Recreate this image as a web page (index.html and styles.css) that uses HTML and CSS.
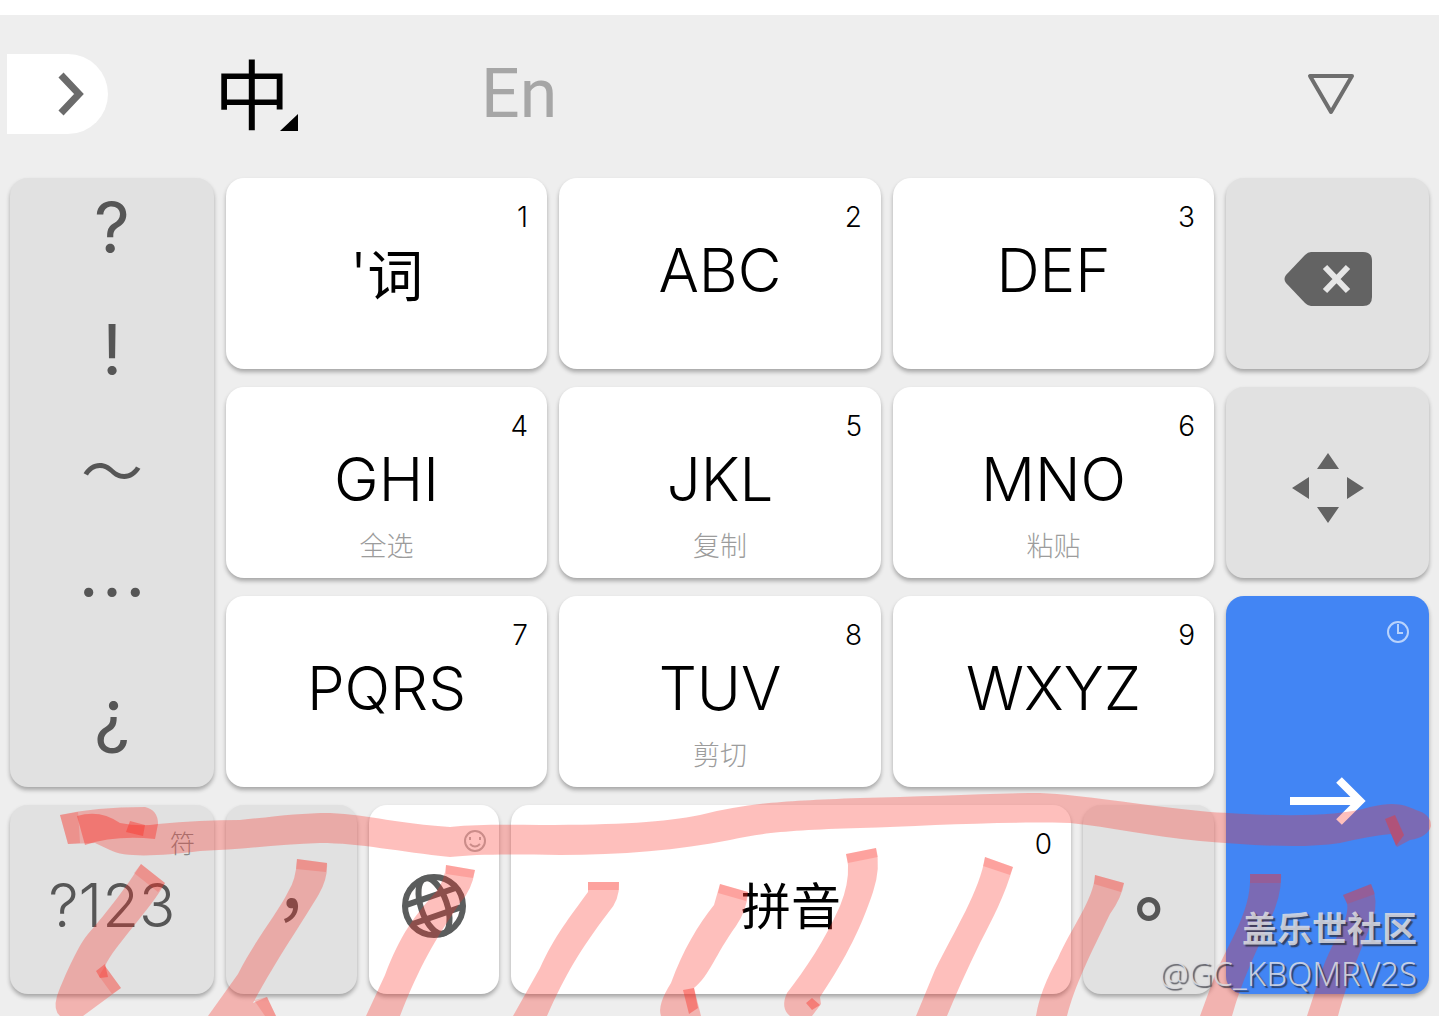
FILE: index.html
```html
<!DOCTYPE html>
<html lang="zh-CN">
<head>
<meta charset="utf-8">
<meta name="viewport" content="width=device-width, initial-scale=1">
<title>拼音键盘</title>
<link rel="stylesheet" href="styles.css">
</head>
<body>
<main class="ime">
  <header class="toolbar">
    <button class="expand" aria-label="展开"><svg width="28" height="44" viewBox="0 0 28 44"><path d="M4 3 22 22 4 41" fill="none" stroke="#6b6b6b" stroke-width="7"/></svg></button>
    <button class="lang lang-zh">中<svg class="corner" width="18" height="17" viewBox="0 0 18 17"><path d="M18 0V17H0z"/></svg></button>
    <button class="lang lang-en">En</button>
    <button class="hide" aria-label="收起键盘"><svg width="48" height="42" viewBox="0 0 48 42"><path d="M3 3H45L24 39z" fill="none" stroke="#6e6e6e" stroke-width="4" stroke-linejoin="round"/></svg></button>
  </header>
  <section class="keys">
    <div class="symbols">
      <button>?</button><button>!</button><button class="wide">～</button><button class="wide dots">…</button><button>¿</button>
    </div>
    <button class="key"><span class="hint">1</span><span class="label label-word">'<span class="han">词</span></span></button>
    <button class="key"><span class="hint">2</span><span class="label">ABC</span></button>
    <button class="key"><span class="hint">3</span><span class="label">DEF</span></button>
    <button class="key grey icon-key" aria-label="删除"><svg width="90" height="56" viewBox="0 0 90 56"><path d="M28 1H80Q89 1 89 10V46Q89 55 80 55H28Q25 55 22 52L3 32Q0 28 3 24L22 4Q25 1 28 1z" fill="#636363"/><path d="M42 16 65 40M65 16 42 40" stroke="#e6e6e6" stroke-width="6"/></svg></button>
    <button class="key"><span class="hint">4</span><span class="label">GHI</span><span class="action">全选</span></button>
    <button class="key"><span class="hint">5</span><span class="label">JKL</span><span class="action">复制</span></button>
    <button class="key"><span class="hint">6</span><span class="label">MNO</span><span class="action">粘贴</span></button>
    <button class="key grey icon-key" aria-label="移动光标"><svg width="72" height="72" viewBox="0 0 72 72" fill="#636363"><path d="M36 1 47 17H25zM36 71 47 55H25zM0 36 17 25V47zM72 36 55 25V47z"/></svg></button>
    <button class="key"><span class="hint">7</span><span class="label">PQRS</span></button>
    <button class="key"><span class="hint">8</span><span class="label">TUV</span><span class="action">剪切</span></button>
    <button class="key"><span class="hint">9</span><span class="label">WXYZ</span></button>
    <button class="key enter" aria-label="确定">
      <svg class="clock" width="24" height="24" viewBox="0 0 24 24" fill="none" stroke="#b9d3fc" stroke-width="2"><circle cx="12" cy="12" r="10"/><path d="M12 4V13H17"/></svg>
      <svg class="arrow" width="78" height="50" viewBox="0 0 78 50" fill="none" stroke="#fff" stroke-width="8"><path d="M1 25H70M50 4 71 25 50 46"/></svg>
    </button>
    <div class="bottom-row">
      <button class="key grey"><span class="hint hint-han">符</span><span class="label label-num">?123</span></button>
      <button class="key grey icon-key comma" lang="zh-TW">，</button>
      <button class="key globe" aria-label="切换输入法">
        <svg class="smile" width="24" height="24" viewBox="0 0 24 24" fill="none" stroke="#b5b5b5" stroke-width="2"><circle cx="12" cy="12" r="10"/><path d="M7 15Q12 20 17 15"/><path d="M7 8V11M17 8V11"/></svg>
        <svg class="world" width="66" height="66" viewBox="0 0 66 66" fill="none" stroke="#5b5d5d" stroke-width="6"><circle cx="33" cy="33" r="29"/><g transform="rotate(-19 33 33)"><ellipse cx="33" cy="33" rx="13" ry="29"/><path d="M6 23H60M6 43H60"/></g></svg>
      </button>
      <button class="key"><span class="hint">0</span><span class="label label-space">拼音</span></button>
      <button class="key grey icon-key stop" lang="zh-TW">。</button>
    </div>
  </section>
  <svg class="marks" viewBox="0 0 1439 1016" preserveAspectRatio="none" aria-hidden="true">
    <g fill="#fb3228" fill-opacity=".31">
      <path d="M60 815Q95 807 145 807Q158 810 158 824Q200 820 240 820C280 816 300 813 330 813C370 815 400 824 450 827C480 824 510 825 540 825C620 825 665 822 700 815C750 803 780 801 860 798C920 797 990 793 1040 793C1085 795 1130 804 1210 812C1260 815 1330 819 1370 807C1395 801 1405 805 1416 810Q1431 814 1431 826Q1428 837 1410 840L1397 847L1391 834Q1370 836 1340 843C1300 849 1250 845 1200 841C1150 836 1110 827 1070 823C1000 821 920 826 860 828C790 830 760 833 730 840C680 850 620 855 560 855C510 854 475 854 450 857C400 852 360 843 320 843C280 844 240 850 200 851C160 856 125 858 110 850L95 843L68 844z"/>
      <path d="M141 864 165 883C150 910 115 945 105 966L121 988 83 1016H60Q53 1010 57 996C66 972 80 943 88 934Q120 897 141 864z"/>
      <path d="M297 859 327 863Q328 878 319 894C300 926 278 957 253 1003L267 997 276 1016H208L238 974C255 940 277 914 288 892Q296 880 297 859z"/>
      <path d="M446 865 475 870Q472 890 460 903C435 940 420 965 400 1016H366L385 975C400 935 415 915 436 892Q445 880 446 865z"/>
      <path d="M588 882H619Q620 900 608 913C580 950 565 975 547 1016H513L540 968C555 935 570 917 588 892z"/>
      <path d="M720 884 748 892Q747 910 736 926C715 955 710 975 694 988L701 1016H661Q657 1005 671 983C683 950 698 925 714 905z"/>
      <path d="M846 854 876 848Q881 868 873 892C862 925 847 957 820 997L821 1004 812 1016H790Q780 1008 787 993C805 970 825 940 840 906Q849 884 848 865z"/>
      <path d="M985 857 1013 867C1005 895 992 920 980 943Q960 984 947 1016H916L935 970C955 930 980 890 985 857z"/>
      <path d="M1095 875 1124 883Q1122 897 1110 914C1090 955 1075 985 1067 1016H1036Q1040 990 1058 958C1070 930 1094 899 1095 875z"/>
      <path d="M1250 874H1281Q1282 895 1270 920C1255 955 1242 980 1232 1016H1200L1215 975C1230 940 1252 910 1250 874z"/>
      <path d="M1343 895 1371 884Q1379 900 1373 919C1355 965 1348 980 1338 1016H1307L1322 970C1335 935 1350 920 1347 903z"/>
    </g>
    <g fill="#fb3228" fill-opacity=".42">
      <path d="M77 816Q100 809 120 823Q140 827 158 824L155 839Q115 835 85 845z"/>
      <path d="M130 821 145 825 143 836 126 832zM96 971 105 964 108 977 100 978zM683 990 694 988 698 1008 689 1014zM806 1003 812 998 820 1005 812 1010zM1385 819 1395 815 1404 835 1396 846z"/>
    </g>
    <g fill="#fb3228" fill-opacity=".2">
      <path d="M60 815 78 812 80 843 68 844zM141 864 165 883 158 892 134 873zM105 966 121 988 112 994 99 976zM297 859 327 863 326 872 296 869zM254 1000 267 997 276 1016H265zM446 865 475 870 473 878 446 874zM588 882H619V890H588zM720 884 748 892 746 901 718 893zM846 854 876 848 878 857 848 863zM985 857 1013 867 1010 875 983 866zM1095 875 1124 883 1121 892 1094 884zM1250 874H1281V883H1250zM1343 895 1371 884 1375 894 1347 904z"/>
    </g>
  </svg>
  <div class="watermark"><strong>盖乐世社区</strong><span>@GC_KBQMRV2S</span></div>
</main>
</body>
</html>
```

FILE: styles.css
```css
* { box-sizing: border-box; }

body {
  margin: 0;
  background: #fff;
  font-family: Inter, "Noto Sans CJK SC", sans-serif;
  font-weight: 300;
  color: #000;
}

button {
  margin: 0;
  padding: 0;
  border: 0;
  background: none;
  color: inherit;
  font: inherit;
  cursor: pointer;
}

svg { display: block; }

.ime {
  position: relative;
  display: flex;
  flex-direction: column;
  min-height: 100vh;
  border-top: 15px solid #fff;
  background: #eee;
  overflow: hidden;
}

.toolbar {
  display: flex;
  align-items: center;
  height: 163px;
  padding: 0 84px 6px 7px;
}

.expand {
  display: flex;
  align-items: center;
  justify-content: flex-end;
  width: 101px;
  height: 80px;
  padding-right: 23px;
  border-radius: 0 40px 40px 0;
  background: #fff;
}

.lang { line-height: 80px; }

.lang-zh {
  display: flex;
  align-items: flex-end;
  margin-left: 106px;
  padding-bottom: 6px;
  font-family: "Noto Sans CJK SC", sans-serif;
  font-size: 76px;
  font-weight: 400;
}

.corner { margin-left: -10px; }

.lang-en {
  margin-left: 183px;
  font-family: Roboto, sans-serif;
  font-size: 68px;
  font-weight: 400;
  color: #a6a6a6;
}

.hide { margin-left: auto; }

.keys {
  flex: 1;
  display: grid;
  grid-template-columns: 204fr 321fr 322fr 321fr 203fr;
  grid-template-rows: repeat(3, 191fr) 189fr;
  gap: 18px 12px;
  padding: 0 10px 22px;
}

.symbols {
  grid-row: 1 / 4;
  display: flex;
  flex-direction: column;
  justify-content: space-between;
  padding-bottom: 22px;
  border-radius: 18px;
  background: #e1e1e1;
  box-shadow: 0 3px 4px rgba(0, 0, 0, .3);
  color: #565656;
  font-size: 70px;
  font-weight: 400;
}

.symbols button {
  height: 100px;
  line-height: 100px;
}

.symbols .wide {
  padding-bottom: 8px;
  font-family: "Noto Sans CJK SC", sans-serif;
  font-size: 62px;
  line-height: 92px;
}

.symbols .dots { font-size: 70px; }

.key {
  display: flex;
  flex-direction: column;
  align-items: center;
  padding: 24px 19px 0;
  border-radius: 18px;
  background: #fff;
  box-shadow: 0 3px 4px rgba(0, 0, 0, .3);
}

.grey {
  background: #e1e1e1;
  color: #565656;
}

.icon-key {
  justify-content: center;
  padding: 10px 0 0;
}

.hint {
  align-self: flex-end;
  font-size: 28px;
  line-height: 30px;
}

.hint-han {
  font-size: 25px;
  color: #888;
}

.label {
  font-size: 60px;
  line-height: 76px;
}

.label-word { line-height: 84px; }

.han {
  font-size: 56px;
  font-weight: 400;
}

.label-num {
  line-height: 92px;
}

.label-space {
  font-size: 50px;
  font-weight: 400;
  line-height: 96px;
}

.action {
  margin-top: 14px;
  font-size: 27px;
  line-height: 32px;
  color: #9c9c9c;
}

.enter {
  grid-column: 5;
  grid-row: 3 / 5;
  background: #4285f4;
}

.clock { align-self: flex-end; }
.arrow { margin-top: 132px; }

.bottom-row {
  grid-column: 1 / 5;
  grid-row: 4;
  display: grid;
  grid-template-columns: 204fr 131fr 130fr 560fr 131fr;
  gap: 12px;
}

.comma {
  font-family: "Noto Sans CJK TC", sans-serif;
  font-size: 72px;
  font-weight: 400;
  line-height: 92px;
}

.globe { padding-right: 12px; }
.smile { align-self: flex-end; }

.world {
  margin: 20px 0 0 -8px;
}

.stop {
  font-family: "Noto Sans CJK TC", sans-serif;
  font-size: 72px;
  font-weight: 700;
  line-height: 92px;
}

.marks {
  position: absolute;
  top: -15px;
  left: 0;
  width: 100%;
  height: calc(100% + 15px);
  pointer-events: none;
}

.watermark {
  position: absolute;
  right: 22px;
  bottom: 20px;
  display: flex;
  flex-direction: column;
  align-items: flex-end;
  color: rgba(222, 222, 226, .85);
  font-family: "Noto Sans", "Noto Sans CJK SC", sans-serif;
  font-size: 33px;
  line-height: 45px;
  text-shadow: 2px 2px 1px rgba(40, 40, 50, .7);
  pointer-events: none;
}

.watermark strong {
  font-size: 35px;
  font-weight: 700;
}
```
